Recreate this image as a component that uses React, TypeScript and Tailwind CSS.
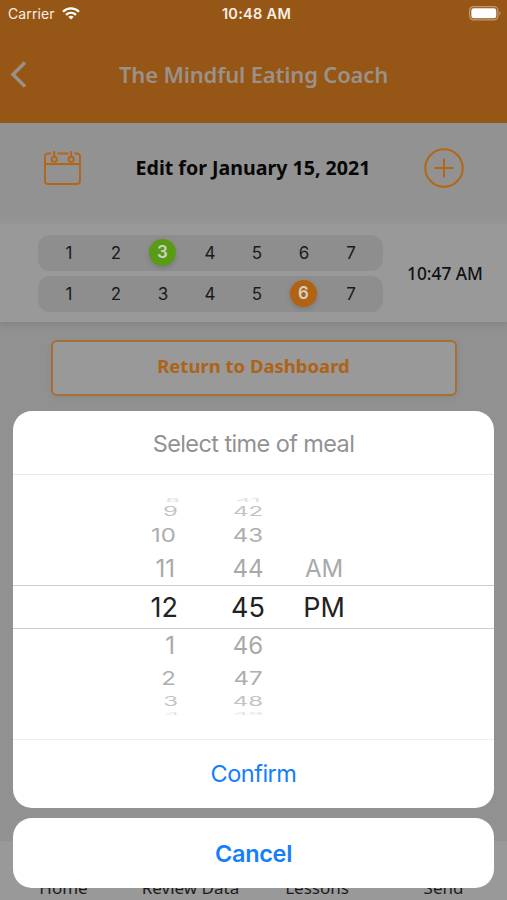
import React from "react";

const hours = ["8", "9", "10", "11", "12", "1", "2", "3", "4"];
const minutes = ["41", "42", "43", "44", "45", "46", "47", "48", "49"];
const periods = ["", "", "", "AM", "PM", "", "", "", ""];

// Wheel rows: slot height, glyph squash and tone, top to bottom.
const rowBox = ["h-2", "h-4", "h-[31px]", "h-[35px]", "h-[42px]", "h-[35px]", "h-[31px]", "h-[15px]", "h-[9px]"];
const rowText = [
  "text-[24px] scale-y-[0.2] text-[#e2e2e2]",
  "text-[24px] scale-y-[0.52] text-[#c4c4c4]",
  "text-[24px] scale-y-[0.8] text-[#aeaeae]",
  "text-[24px] text-[#a9a9a9]",
  "text-[27px] text-[#222]",
  "text-[24px] text-[#a9a9a9]",
  "text-[24px] scale-y-[0.8] text-[#aeaeae]",
  "text-[24px] scale-y-[0.52] text-[#c4c4c4]",
  "text-[24px] scale-y-[0.15] text-[#e4e4e4]",
];
const hourEdge = ["pr-0", "pr-[2px]", "pr-1", "pr-[5px]", "pr-[2px]", "pr-[5px]", "pr-1", "pr-[2px]", "pr-0"];

function Rating({ selected, tone }: { selected: number; tone: string }) {
  return (
    <div className="flex h-9 w-[345px] items-center rounded-[12px] bg-[#8e8e8e] pl-[7px] font-['Inter',sans-serif]">
      {[1, 2, 3, 4, 5, 6, 7].map((n) => (
        <div key={n} className="flex w-[47px] justify-center">
          <span
            className={
              n === selected
                ? "flex size-[27px] items-center justify-center rounded-full pt-px text-[17px] font-semibold text-[#cfd0c8] shadow-[0_2px_5px_rgba(0,0,0,0.15)] " + tone
                : "pt-[2px] pl-px text-[17px] text-[#1a1a1a]"
            }
          >
            {n}
          </span>
        </div>
      ))}
    </div>
  );
}

function Backdrop() {
  return (
    <div className="flex h-full flex-col">
      <header className="h-[123px] bg-[#965616]">
        <div className="flex h-[27px] items-center justify-between pr-[6px] pl-2 font-['Inter',sans-serif] text-[14px] text-[#f8eee4]">
          <div className="flex w-[84px] items-center gap-[7px]">
            <span className="tracking-[0.1px]">Carrier</span>
            <svg width="18" height="13" viewBox="0 0 18 13" fill="none" stroke="#fff" strokeWidth="2.3">
              <path d="M1 4.7C5.5.3 12.5.3 17 4.7" />
              <path d="M4 7.8c2.9-2.7 7.1-2.7 10 0" />
              <path d="M6.3 9.7c1.6-1.4 3.8-1.4 5.4 0L9 12.6z" fill="#fff" stroke="none" />
            </svg>
          </div>
          <span className="text-[14.5px] font-semibold tracking-[0.3px]">10:48 AM</span>
          <div className="flex w-[80px] justify-end">
            <svg width="32" height="15" viewBox="0 0 32 15">
              <rect x=".6" y=".6" width="28.3" height="13.3" rx="4" fill="none" stroke="#c39a73" strokeWidth="1.2" />
              <rect x="2.3" y="2.3" width="25" height="10" rx="2.4" fill="#fff" />
              <path d="M30.3 5.2c1.6.7 1.6 3.5 0 4.2z" fill="#c39a73" />
            </svg>
          </div>
        </div>
        <div className="flex h-[95px] items-center">
          <svg width="30" height="30" viewBox="0 0 30 30" fill="none" stroke="#9b9189" strokeWidth="3.4">
            <path d="M25 2.5 13 14.5l12 12" />
          </svg>
          <h1 className="flex-1 pr-[30px] text-center font-['Noto_Sans',sans-serif] text-[22px] font-semibold tracking-[-0.17px] text-[#9b9189]">
            The Mindful Eating Coach
          </h1>
        </div>
      </header>

      <section className="flex h-[101px] items-center bg-linear-to-b from-[#929292] from-94% to-[#979797] pb-[11px]">
        <svg className="ml-[43px]" width="40" height="38" viewBox="0 0 40 38" fill="none" stroke="#b56615" strokeWidth="1.9">
          <path d="M8.2 4.5H5a3 3 0 0 0-3 3V32a3 3 0 0 0 3 3h29a3 3 0 0 0 3-3V7.5a3 3 0 0 0-3-3h-2.500M14.500 4.500h11M2 15h35" />
          <circle cx="11.2" cy="10.3" r="2.6" />
          <circle cx="28.2" cy="10.3" r="2.6" />
          <path d="M11.2 2v5.500M28.200 2v5.500" />
        </svg>
        <h2 className="flex-1 text-center font-['Noto_Sans',sans-serif] text-[19.6px] font-bold text-[#070707]">
          Edit for January 15, 2021
        </h2>
        <svg className="mr-[42px]" width="42" height="42" viewBox="0 0 42 42" fill="none" stroke="#b56615" strokeWidth="2">
          <circle cx="21" cy="21" r="18.7" />
          <path d="M11.5 21h19M21 11.500v19" />
        </svg>
      </section>

      <section className="z-10 flex h-[98px] items-center bg-[#999] pl-[38px] shadow-[0_3px_6px_rgba(0,0,0,0.1)]">
        <div className="flex flex-col gap-[5px]">
          <Rating selected={3} tone="bg-[#589b14]" />
          <Rating selected={6} tone="bg-[#b26311]" />
        </div>
        <span className="flex-1 pt-px text-center font-['Noto_Sans',sans-serif] text-[17.3px] font-medium text-[#111]">
          10:47 AM
        </span>
      </section>

      <section className="flex flex-1 flex-col items-center bg-[#919191] pt-[18px]">
        <div className="flex h-[56px] w-[406px] items-center justify-center rounded-[6px] border-2 border-[#a66f38] bg-[#999] pb-1 font-['Noto_Sans',sans-serif] text-[18.5px] font-bold text-[#ae6316] shadow-[0_2px_6px_rgba(0,0,0,0.06)]">
          Return to Dashboard
        </div>
      </section>

      <nav className="h-[59px] overflow-hidden bg-[#999] pt-[35px] font-['Noto_Sans',sans-serif] text-[17px] leading-6 text-[#1c1c1c]">
        <div className="flex text-center">
          <span className="w-[127px]">Home</span>
          <span className="w-[127px]">Review Data</span>
          <span className="w-[126px]">Lessons</span>
          <span className="w-[127px]">Send</span>
        </div>
      </nav>
    </div>
  );
}

function Wheel({ items, column, edges }: { items: string[]; column: string; edges?: string[] }) {
  return (
    <div className={column}>
      {items.map((item, i) => (
        <div key={i} className={`flex items-center ${edges ? "justify-end " + edges[i] : "justify-center"} ${rowBox[i]}`}>
          <span className={`inline-block leading-none whitespace-nowrap ${rowText[i]}`}>{item}</span>
        </div>
      ))}
    </div>
  );
}

export default function App() {
  return (
    <div className="relative h-[900px] w-[507px] overflow-hidden">
      <Backdrop />
      <div className="absolute inset-x-[13px] bottom-[12px] z-20 flex flex-col gap-[10px] font-['Inter',sans-serif]">
        <div className="flex h-[397px] flex-col rounded-[19px] bg-white">
          <div className="flex h-[64px] items-center justify-center border-b border-[#e9e9e9] pt-[2px] text-[23.5px] tracking-[-0.6px] text-[#929292]">
            Select time of meal
          </div>
          <div className="relative h-[264px] pt-[21px]">
            <div className="pointer-events-none absolute inset-x-0 top-[110px] h-[44px] border-y border-[#cdcdcd]" />
            <div className="flex">
              <Wheel items={hours} edges={hourEdge} column="w-[167px]" />
              <Wheel items={minutes} column="ml-[38px] w-[60px]" />
              <Wheel items={periods} column="ml-[16px] w-[60px]" />
            </div>
          </div>
          <button className="flex h-[69px] items-center justify-center border-t border-[#eee] text-[23.5px] tracking-[-0.5px] text-[#147efb]">
            Confirm
          </button>
        </div>
        <button className="flex h-[70px] items-center justify-center rounded-[19px] bg-white pt-px text-[23.5px] font-semibold tracking-[-0.3px] text-[#147efb]">
          Cancel
        </button>
      </div>
    </div>
  );
}
